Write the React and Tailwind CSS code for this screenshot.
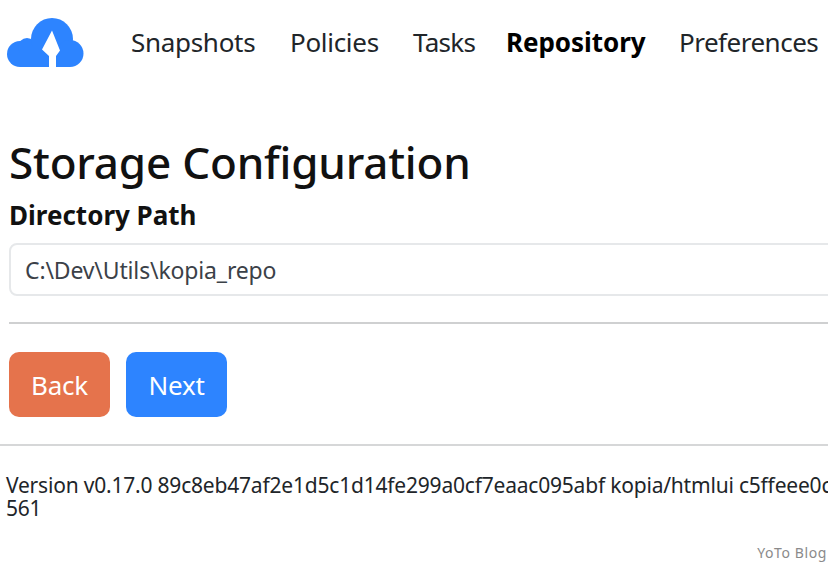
import React from 'react';

const navItems = [
  { label: 'Snapshots', width: 'w-[159px]', spacing: 'tracking-[-0.3px]' },
  { label: 'Policies', width: 'w-[123px]', spacing: 'tracking-[-0.3px]' },
  { label: 'Tasks', width: 'w-[93px]', spacing: 'tracking-[-0.7px]' },
  { label: 'Repository', width: 'w-[173px]', spacing: 'tracking-[-0.05px]', active: true },
  { label: 'Preferences', width: 'w-[150px]', spacing: 'tracking-[-0.5px]' },
];

function Logo() {
  return (
    <svg width="77" height="49" viewBox="0 0 77 49" className="shrink-0">
      <g fill="#2d84ff">
        <circle cx="13" cy="36" r="13" />
        <circle cx="20" cy="29" r="9" />
        <circle cx="45" cy="21" r="21" />
        <circle cx="63" cy="35.500" r="13.500" />
        <rect x="13" y="28" width="50" height="21" />
      </g>
      <path fill="#ffffff" d="M45 12.500L35 31.500L42 38V49H49V38L53 32.500Z" />
    </svg>
  );
}

function App() {
  return (
    <div className="w-[828px] h-[563px] overflow-hidden relative bg-white text-[#212529] font-['Noto_Sans',sans-serif]">
      {/* Navbar */}
      <nav className="flex items-center h-[84px] pl-[7px]">
        <Logo />
        <div className="flex ml-[47px] text-[26px]">
          {navItems.map((item) => (
            <a key={item.label} className={`${item.width} ${item.spacing} shrink-0 ${item.active ? 'font-bold text-black' : ''}`}>
              {item.label}
            </a>
          ))}
        </div>
      </nav>

      <div className="w-[1100px]">
        <div className="pl-[9px]">
          <h1 className="mt-[42px] text-[44px] leading-[73px] tracking-[-0.2px] font-medium text-[#111]">Storage Configuration</h1>
          <label className="block text-[26px] leading-[32px] font-bold text-[#111]">Directory Path</label>
          <input
            readOnly
            value="C:\Dev\Utils\kopia_repo"
            className="block mt-[12px] w-full h-[53px] px-[14px] text-[23px] tracking-[-0.15px] text-[#3b4148] border-2 border-[#e6e8ea] rounded-[8px] outline-none"
          />
          <hr className="mt-[26px] border-t-2 border-[#cfd0d1]" />
          <div className="flex gap-[16px] mt-[28px]">
            <button className="w-[101px] h-[65px] pt-[2px] rounded-[10px] bg-[#e5734c] text-white text-[26px] tracking-[-0.2px]">Back</button>
            <button className="w-[101px] h-[65px] pt-[2px] rounded-[10px] bg-[#2d84ff] text-white text-[26px] tracking-[-0.2px]">Next</button>
          </div>
        </div>
        <hr className="mt-[27px] border-t-2 border-[#d6d7d8]" />
        <p className="mt-[28px] pl-[6px] text-[21px] leading-[23px] tracking-[-0.2px] whitespace-nowrap">
          <span className="block">Version v0.17.0 89c8eb47af2e1d5c1d14fe299a0cf7eaac095abf kopia/htmlui c5ffeee0c</span>
          <span className="block">561</span>
        </p>
      </div>

      {/* watermark */}
      <span className="absolute right-[1px] bottom-[1px] text-[14px] leading-[18px] text-[#8a8a8a] tracking-[0.6px]">YoTo Blog</span>
    </div>
  );
}

export default App;
